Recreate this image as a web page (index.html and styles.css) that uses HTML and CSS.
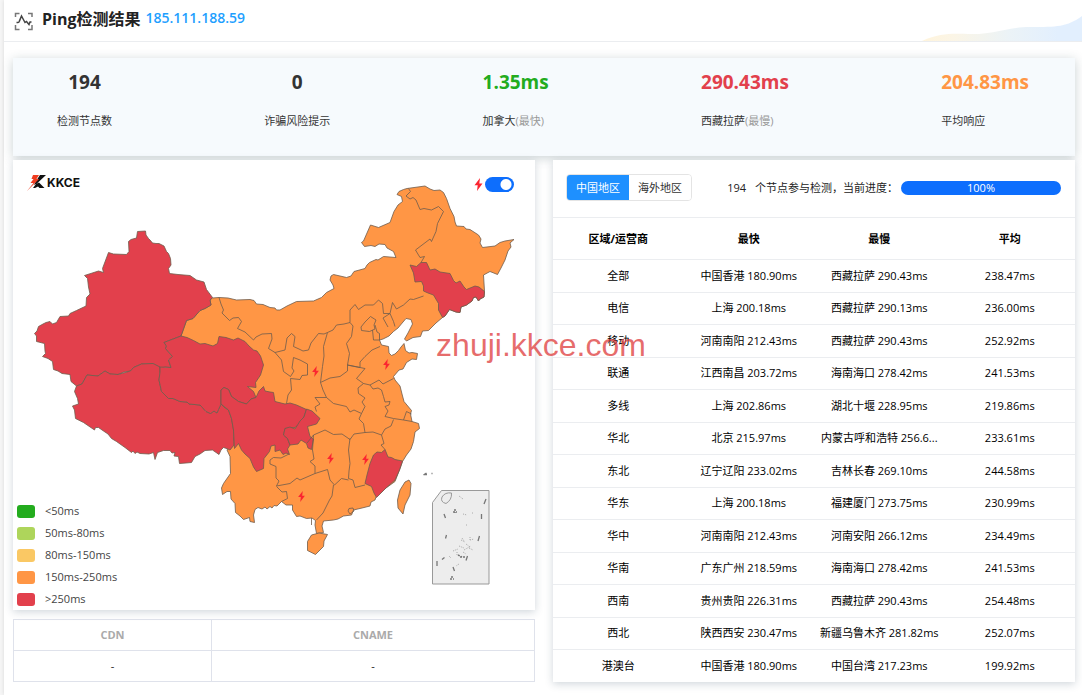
FILE: index.html
```html
<!DOCTYPE html>
<html lang="zh-CN">
<head>
  <meta charset="UTF-8"/>
  <meta name="viewport" content="width=device-width, initial-scale=1.0"/>
  <title>Ping检测结果</title>
  <link rel="stylesheet" href="styles.css">
</head>
<body>

<svg class="defs" aria-hidden="true">
  <symbol id="bolt" viewBox="0 0 8 13"><path d="M5.5 0 L0 7.2 H3.2 L2.5 13 L8 5.6 H4.8 Z" fill="#fb2530"/></symbol>
</svg>

<div class="page">
  <header class="page-header">
    <svg class="header-icon" viewBox="0 0 20 20" fill="none" stroke-width="1.5">
      <path d="M1.500 6V2.500H5.500M14 2.500h4V6M18 14v4.500H14M5.500 18.500H1.500V14" stroke="#777"/>
      <path d="M2.500 11.500h1.500q1 0 1.400-1.400L7.500 5l3.500 6.500 1.500-1 2.500 3 1-2.500h1.500" stroke="#444"/>
    </svg>
    <h1>Ping检测结果</h1>
    <span class="ip">185.111.188.59</span>
    <svg class="wave" viewBox="0 0 160 26" preserveAspectRatio="none">
      <defs>
        <linearGradient id="waveFill">
          <stop offset="0" stop-color="#fff4dc"/>
          <stop offset=".2" stop-color="#fbf5e6"/>
          <stop offset=".55" stop-color="#ebf3f7"/>
          <stop offset=".85" stop-color="#e2effe"/>
          <stop offset="1" stop-color="#e2effe"/>
        </linearGradient>
      </defs>
      <path d="M0 26C20 17 32 19 50 19C75 19 85 12 108 12C135 12 145 12 160 1V26Z" fill="url(#waveFill)"/>
    </svg>
  </header>

  <main class="content">
    <section class="stats">
      <div class="stat center"><b>194</b><span>检测节点数</span></div>
      <div class="stat center"><b>0</b><span>诈骗风险提示</span></div>
      <div class="stat fast"><b>1.35ms</b><span>加拿大<i>(最快)</i></span></div>
      <div class="stat slow"><b>290.43ms</b><span>西藏拉萨<i>(最慢)</i></span></div>
      <div class="stat avg"><b>204.83ms</b><span>平均响应</span></div>
    </section>

    <div class="columns">
      <div class="left">
        <section class="card map-card">
          <svg class="map" viewBox="13 160 522 450" role="img" aria-label="中国地图">
            <g stroke="#6f5c4c" stroke-opacity=".8" stroke-width="1" stroke-linejoin="round">
              <!-- mainland -->
              <path class="mid" d="M212.500 298L219 297.500 228 298 236.500 300 250 299.500 254 300.500 256.500 304 263 304.500 270 307.500 275 308 276.500 310 280 310 287 306 296.500 301.500 313.500 301 321.500 297.500 326.500 292.500 334 288.500 333 285 330 280 331 276 333.500 274.500 346.500 277.500 351 276 354 271.500 365 268.500 367 265 369.500 262.500 376 259.500 378 260 383.500 256.500 396 257.500 393.500 251.500 387 248 385 244.500 379 244 375 246.500 371 245.500 364.500 246.500 361.500 242.500 363.500 241 370.500 225 378.500 227.500 390 222.500 392 217 394 211.500 398 205 402.500 201.500 401.500 196.500 397 194.500 399 191.500 403.500 189.500 407 188.500 425 186 430 189 434 190.500 440 190 443.500 192.500 446.500 198.500 450 208.500 454 216.500 455 222 456.500 226 464 226.500 466 229 470 229.500 478.500 235 481 239 480 243 482.500 247.500 495 246 500 242.500 505 241 514 239.500 510 243 511 247 508 251 505 260 501 268 497.500 274.500 490 271.500 483.500 275 484.500 291.500 484 297 480 299 478.500 301 476 297 473.500 297.500 472 301 466.500 305 461 307 460 312.500 456 312 449.500 309.500 445 316 442.500 317.500 436 323 428.500 330.500 422.500 331 420.500 336.500 413 337.500 406.500 341 404.500 339 408 333 412.500 324 411 319.500 406 318.500 403 322 398 328 393.500 331.500 389 336 383 339 379.500 340 381.500 345 388.500 346.500 389 353 391.500 355.500 395 354 398.500 350.500 401 347 404 343.500 405.500 350.500 409 353 412 352.500 417.500 353.500 416.500 359.500 412 359 406.500 362.500 403 369 399 370 393.500 376.500 395 380 400 386 402 394 404 401.500 411.500 410.500 410.500 414 412 421.500 418.500 423.500 419.500 428.500 415 432 413.500 441.500 411 449 406.500 455 402.500 461.500 400 468.500 395 481.500 386 488 376 497 375 500 371 502 370 506 362 508 353.500 510 351.500 515 343.500 516 338 519 333.500 520 323.500 521 322 526 323.500 532.500 316.500 533.500 315 525 315.500 520.500 312 518 306.500 518.500 300 516 296.500 516.500 292.500 510 292.500 505 286 505 281.500 501.500 277 506 274 505.500 272 508 270 506.500 267 509 265 507 262 509 258 507.500 255 509.500 253.500 515 254.500 522.500 250 521.500 249.500 517.500 243.500 519.500 240 516 235.500 512.500 235 503.500 231 499 230.500 491.500 227 491.500 222.500 494.500 221.500 488 223.500 483.500 230.500 473.500 230 456.500 227 450 233.500 439.500 220 400 190 350 181 336 186.500 320.500 193 318.500 200 310.500 205 308.500 211 305 210 300Z"/>
              <!-- Hainan, Taiwan -->
              <path class="mid" d="M311.500 535L319 533 327.500 534.500 324 541 323.500 546.500 315.500 554.500 307.500 550.500V541.500ZM409 480L411 483.500 410 495 405 505 403 514 398 508 397.500 500 400 490 405 482Z"/>
              <!-- Xinjiang -->
              <path class="high" d="M137.500 231.500L145.500 231 146 235 148.500 238.500 150 240 152.500 243 156 243.500 159 243.500 164 246 166.500 251.500 168.500 253.500 170.500 258.500 171 265 168.500 268.500 169.500 273.500 178 274.500 190 275.500 196.500 280 204 282 206.500 289.500 212.500 297.500 210 300 211 305 205 308.500 200 310.500 193 318.500 186.500 320.500 181 336 164 342.500 166.500 346 165.500 348.500 172.500 356.500 168.500 360 171 367.500 165 367 161 368 153 363.500 141.500 364 133.500 367.500 130.500 371 124 372 118 374.500 110 374 105 371 98 376 87 375 82 384 76.500 386 71 381.500 70 374.500 62 373.500 58 371 53.500 369.500 52.500 361.500 48 358.500 42.500 356.500 45.500 353.500 45 351 44.500 343.500 36.500 341.500 36.500 336 34.500 333.500 37 331 38.500 326.500 43 324 46 322.500 50 321.500 52.500 324 56.500 322.500 60 316.500 68.500 316 70 313.500 76.500 310.500 86 306 86.500 297.500 90 294 88.500 287 87.500 278.500 84.500 275.500 98.500 271 103.500 272.500 102.500 268.500 108.500 252.500 113.500 254 126.500 254.500 129 251.500 128.500 241.500 131 239.500 136.500 238Z"/>
              <!-- Tibet -->
              <path class="high" d="M76.500 386L82 384 87 375 98 376 105 371 110 374 118 374.500 130.500 371 133.500 367.500 141.500 364 153 363.500 160 367 160 372 159 380 161.500 391.500 168.500 398.500 173 398.500 180 401.500 187 402 189 404 200 405 203 408 206 411.500 210.500 413.500 214 411 217 413 218.500 409.500 221 404 225 408 228.500 410 231.500 418.500 233.500 430 234 445 230 450 228 449 223.500 447.500 221 450 219 454.500 212.500 450 205 450.500 200 454 195 456.500 191.500 462.500 186 463 179.500 463.500 178.500 456.500 174 456 175 452.500 172 453 170 450.500 163.500 450.500 157.500 452.500 155 459.500 153.500 452.500 149 454 140 453.500 137 452 135 453.500 133 451 131.500 452.500 125 447.500 116.500 441.500 111.500 438.500 108 434 103.500 431 98.500 427.500 95.500 427.500 94.500 430 83.500 422.500 75.500 418.500 74.500 410 72.500 406 78.500 404 77.500 398.500 74.500 391.500Z"/>
              <!-- Qinghai -->
              <path class="high" d="M181 336L164 342.500 166.500 346 165.500 348.500 172.500 356.500 168.500 360 171 367.500 160 367 160 372 159 380 161.500 391.500 168.500 398.500 173 398.500 180 401.500 187 402 189 404 200 405 206 411.500 210.500 413.500 214 411 217 413 218.500 409.500 221 404 221 390 224 387.500 228.500 389.500 231.500 396.500 238.500 401.500 246.500 404 251 399 256 397.500 253.500 391.500 247.500 386.500 256 387.500 255.500 382.500 260.500 375 263.500 365 260.500 356 257 351 253.500 350 249 346 245 341.500 238 338 233.500 340 226 337.500 219 336.500 217.500 343.500 213 346 205 343.500 200 344 193.500 340.500 187 337.500Z"/>
              <!-- Sichuan -->
              <path class="high" d="M221 404L221 390 224 387.500 228.500 389.500 231.500 396.500 238.500 401.500 246.500 404 251 399 256 397.500 259 391 263.500 386.500 265 391 270 392 273.500 392.500 275 401.500 285 404 290 403 296.500 405 306.500 409.500 304 416.500 300 423.500 295 427.500 285 428.500 283.500 435 287.500 438.500 290 445 287.500 449 289.500 454.500 286 453 283 454.500 280 450 275 451.500 275 445 271 446 269.500 451.500 264 458.500 263.500 468.500 256.500 471.500 253.500 467 250 458.500 245 454 241.500 450 238.500 443.500 234.500 448.500 233.500 430 231.500 418.500 228.500 410Z"/>
              <!-- Chongqing -->
              <path class="high" d="M306.500 409L312 411 320 418.500 316.500 424 307.500 426.500 310 436.500 313.500 439 311.500 449.500 308 448 306.500 443.500 301 440 298 444 290 445 287.500 438.500 283.500 435 285 428.500 290 427 295 429 300 421 304 417Z"/>
              <!-- Jilin -->
              <path class="high" d="M410 265L416.500 266.500 421 262.500 426.500 262.500 430 270 435 269 440 272 450 273.500 453.500 280.500 456 283 460 281 464 287 466.500 289.500 475 286 479 287 484.500 291.500 484 297 480 299 478.500 301 476 297 473.500 297.500 472 301 466.500 305 461 307 460 312.500 456 312 449.500 309.500 445 316 442.500 317.500 438.500 310 438.500 303.500 433.500 295 428 293 423.500 291 423.500 286 421.500 281.500 415 282 413.500 273Z"/>
              <!-- Fujian -->
              <path class="high" d="M385 449.500L388 457 391.500 457.500 395 459.500 402.500 461 399.500 470 395 480 386.500 487.500 376.500 497.500 374 493 371.500 486.500 365 483.500 367 475 370 463.500 373.500 455 377 452 381.500 452.500Z"/>
              <!-- province borders -->
              <g fill="none">
                <path d="M408.500 188.500L410.500 191.500 406 196 410 199 413 197.500 416 200 420 209.500 424 208.500 431.500 210 438.500 206.500 443.500 211.500 437.500 223.500 436 231.500 431.500 241.500 430 239 415.500 250 420 257.500 424.500 256.500 421 262.500"/>
                <path d="M423.500 296L413.500 299.500 410 299 403.500 305 396.500 309 392.500 302.500 390 313.500 393.500 321.500 395 326.500 M388 327L383 318 390 313.500H383.500L382.500 303.500 378.500 300 373.500 305 365 305 358.500 309.500 355 304.500 350 310 350 322.500 353 326 351.500 336.500 346.500 343.500 349.500 353.500 347.500 365 360 367.500 360 362 365 356.500 372 350 380 346.500"/>
                <path d="M370.500 316.500L376 320 374 325 375 329 369.500 331.500 361.500 330.500 361 327 365 322 370.500 316.500M375 325L377 332 379.500 333.500V340L373.500 340 372.500 330"/>
                <path d="M350 322.500L344 324 336.500 325 333 330 327.500 332.500 323.500 346.500 324 356 322.500 366.500 320.500 382.500 330 378 340 376.500 347.500 371V365"/>
                <path d="M327.500 332.500L324 334 318.500 333.500 311 343 308.500 350 303 351 299 349 293.500 346.500 295 336.500 291.500 333.500 287 338 285 350 275 352.500 281.500 360 283.500 371.500 290.500 376.500 294 371 292 368 293.500 357.500 300 360 307.500 364V375L302 375.500 300 379.500 290.500 378.500 291.500 390 288 395 286.500 403.500"/>
                <path d="M219 297.500L221 304 223.500 310 222 313 229.500 320.500 233 318 238.500 317.500 241.500 321.500 237.500 328.500 245 332 253.500 340 256 337 262 334 271.500 333.500 272 339 268.500 348.500 275 352.500"/>
                <path d="M347.500 365L365 368.500 356.500 378.500 363.500 383.500 370 385 379 380 383 384 393.500 378.500"/>
                <path d="M320.500 382.500L323 390 326.500 397.500 333.500 403.500 346.500 406.500 350 412 354 410 361.500 413.500 365 406.500 362 402 365 398 358.500 393.500 358 388 363.500 383.500"/>
                <path d="M370 385L373 389 378 388 381.500 390 383.500 396.500 385 402 390 401.500 389 405 385 406.500 388 411 385 416.500 393.500 418.500 403.500 420 406.500 411.500 411.500 414M403.500 420L412 421.500"/>
                <path d="M326.500 397.500H315L320 404 315 407 316.500 411.500M307 443L313.500 435 325 430 333.500 434.500 342 434 350 439.500 354 434 365 432.500 363.500 423.500 359 419 361.500 413.500M365 432.500L373 432 381.500 435 385 429 391 426 393.500 419.500M381.500 435L384 443.500 381 445 385 449.500"/>
                <path d="M350 438.500L348.500 450 350 463.500 349 471 348.500 478.500 353 480 355 487.500 365 485M313.500 435L312.500 450 314 459 310 461.500 315 466V473.500L327.500 469.500 330 480 334.500 485 341.500 478.500 348.500 480"/>
                <path d="M333.500 485L332 496 329.500 500 323 513 316.500 520M289 454L281 458 273.500 457.500 270 460 270 464 276 466.500 276 478 279 481 276.500 486 290 483.500 297 478 300 480 315 473.500M276.500 486.500L282 492 286.500 491.500 287.500 498.500 281.500 501.500"/>
                <path d="M348 511L349 508.500 353 508 354 511 350 514ZM311.500 518V525"/>
              </g>
            </g>
            <!-- South China Sea inset -->
            <path d="M441.500 490.500H489V584H432.500V502.500Z" fill="#ededed" stroke="#999"/>
            <g fill="none" stroke="#777" stroke-width="1">
              <path d="M442 497Q445 492 451.500 493Q452 500 446 503.500Q440 502 442 497Z" stroke="#999"/>
              <path d="M486 499L484 504M481.500 514V519M444 514L445.500 518M446.500 535L445.500 538.500M479.500 536L478 541M437 561V566M467.500 556L466 560.500M444.500 557.500L442 559.500M453 567L454.500 571" stroke-width="1.300"/>
              <path d="M460 557h5M458 555l4 2M450 579h4M451 577h3M453 512h4M455 509v4" stroke-width="1.500" stroke-dasharray="2 1"/>
              <path d="M459 496l4 3M463 514l4 1M472 513h2M466 525h2M461 540l4 2M462 538l2 3M459 546l5 2M466 544l4 3M470 540l4-1M469 548l4 2M463 552l3 2M453 551l5-2M457 552v3M449 556l2 2M464 550l7-4M470 537v3M459 564l-3 2" stroke="#aaa" stroke-dasharray="1 1"/>
              <path d="M423.500 475l3-2M424 474.500h3M431.500 473.500h1" stroke-width="1.500"/>
            </g>
            <use href="#bolt" x="312" y="366" width="7" height="11"/>
            <use href="#bolt" x="383" y="359" width="7" height="11"/>
            <use href="#bolt" x="327" y="453" width="7" height="11"/>
            <use href="#bolt" x="362" y="454" width="7" height="11"/>
            <use href="#bolt" x="298" y="491" width="7" height="11"/>
          </svg>

          <div class="map-bar">
            <div class="logo">
              <svg viewBox="0 0 20 17">
                <path d="M13 0H19L10 8.500 7 10 9 6Z" fill="#111"/>
                <path d="M9 9L12 7.500 17.500 13H12.500L11 11.500 8 13H6Z" fill="#111"/>
                <path d="M6 0H12L9.500 4H12L0 16 6.500 8H3.500L6.500 4H4.500Z" fill="#f03c20"/>
              </svg>
              <span>KKCE</span>
            </div>
            <label class="switch">
              <svg><use href="#bolt"/></svg>
              <input type="checkbox" aria-label="闪电标记" checked>
            </label>
          </div>

          <ul class="legend">
            <li><i class="l1"></i>&lt;50ms</li>
            <li><i class="l2"></i>50ms-80ms</li>
            <li><i class="l3"></i>80ms-150ms</li>
            <li><i class="l4"></i>150ms-250ms</li>
            <li><i class="l5"></i>&gt;250ms</li>
          </ul>
        </section>

        <table class="cdn-table">
          <thead><tr><th>CDN</th><th>CNAME</th></tr></thead>
          <tbody><tr><td>-</td><td>-</td></tr></tbody>
        </table>
      </div>

      <section class="card result-card">
        <div class="result-bar">
          <div class="tabs">
            <button type="button" class="active">中国地区</button>
            <button type="button">海外地区</button>
          </div>
          <div class="progress-text"><span>194</span>个节点参与检测，当前进度：</div>
          <div class="progress">100%</div>
        </div>
        <div class="table-wrap">
          <table class="result-table">
            <thead>
              <tr><th>区域/运营商</th><th>最快</th><th>最慢</th><th>平均</th></tr>
            </thead>
            <tbody>
              <tr><td>全部</td><td>中国香港 180.90ms</td><td>西藏拉萨 290.43ms</td><td>238.47ms</td></tr>
              <tr><td>电信</td><td>上海 200.18ms</td><td>西藏拉萨 290.13ms</td><td>236.00ms</td></tr>
              <tr><td>移动</td><td>河南南阳 212.43ms</td><td>西藏拉萨 290.43ms</td><td>252.92ms</td></tr>
              <tr><td>联通</td><td>江西南昌 203.72ms</td><td>海南海口 278.42ms</td><td>241.53ms</td></tr>
              <tr><td>多线</td><td>上海 202.86ms</td><td>湖北十堰 228.95ms</td><td>219.86ms</td></tr>
              <tr><td>华北</td><td>北京 215.97ms</td><td>内蒙古呼和浩特 256.6...</td><td>233.61ms</td></tr>
              <tr><td>东北</td><td>辽宁辽阳 233.02ms</td><td>吉林长春 269.10ms</td><td>244.58ms</td></tr>
              <tr><td>华东</td><td>上海 200.18ms</td><td>福建厦门 273.75ms</td><td>230.99ms</td></tr>
              <tr><td>华中</td><td>河南南阳 212.43ms</td><td>河南安阳 266.12ms</td><td>234.49ms</td></tr>
              <tr><td>华南</td><td>广东广州 218.59ms</td><td>海南海口 278.42ms</td><td>241.53ms</td></tr>
              <tr><td>西南</td><td>贵州贵阳 226.31ms</td><td>西藏拉萨 290.43ms</td><td>254.48ms</td></tr>
              <tr><td>西北</td><td>陕西西安 230.47ms</td><td>新疆乌鲁木齐 281.82ms</td><td>252.07ms</td></tr>
              <tr><td>港澳台</td><td>中国香港 180.90ms</td><td>中国台湾 217.23ms</td><td>199.92ms</td></tr>
            </tbody>
          </table>
        </div>
      </section>
    </div>
  </main>
</div>

<div class="watermark">zhuji.kkce.com</div>

</body>
</html>
```

FILE: styles.css
```css
* {
  box-sizing: border-box;
}

body {
  margin: 0;
  padding-left: 4px;
  background: #f6f6f6;
  font-family: "Open Sans", "Noto Sans CJK SC", sans-serif;
  font-size: 11px;
  line-height: 16px;
  color: #222;
}

table {
  border-collapse: collapse;
  table-layout: fixed;
  width: 100%;
}

.defs {
  position: absolute;
  width: 0;
  height: 0;
}

.page {
  min-height: 100vh;
  background: #fff;
  box-shadow: 0 0 4px rgba(0, 0, 0, .12);
}

.page-header {
  display: flex;
  align-items: center;
  height: 42px;
  padding-left: 10px;
  border-bottom: 1px solid #ebedf0;
}

.header-icon {
  width: 20px;
  height: 20px;
  margin-right: 8px;
}

.page-header h1 {
  margin: 0 5px 4px 0;
  font-size: 16px;
  line-height: 24px;
  font-weight: 700;
}

.ip {
  margin-bottom: 5px;
  font-size: 14px;
  font-weight: 600;
  color: #1e9fff;
}

.wave {
  width: 160px;
  height: 26px;
  margin-left: auto;
  align-self: flex-end;
}

.content {
  padding: 16px 7px 12px 9px;
}

.stats {
  display: flex;
  justify-content: space-between;
  height: 98px;
  padding: 11px 46px 12px 44px;
  background: #f6fafd;
  box-shadow: 0 2px 10px rgba(40, 70, 80, .25);
}

.stat {
  display: flex;
  flex-direction: column;
  gap: 18px;
}

.stat.center {
  align-items: center;
}

.stat b {
  font-size: 19px;
  line-height: 26px;
  color: #333;
}

.stat span {
  color: #333;
}

.stat i {
  font-style: normal;
  color: #999;
}

.stat.fast b {
  color: #23ac1e;
}

.stat.slow b {
  color: #e2404c;
}

.stat.avg b {
  color: #ff9645;
}

.columns {
  display: grid;
  grid-template-columns: 1fr 1fr;
  gap: 18px;
  margin-top: 4px;
}

.left {
  display: flex;
  flex-direction: column;
  gap: 9px;
}

.card {
  position: relative;
  background: #fff;
  box-shadow: 0 2px 8px rgba(40, 70, 90, .22);
}

.map {
  display: block;
  width: 100%;
}

.mid {
  fill: #ff9645;
}

.high {
  fill: #e2404c;
}

.map-bar {
  position: absolute;
  top: 14px;
  left: 14px;
  right: 21px;
  display: flex;
  justify-content: space-between;
}

.logo {
  display: flex;
  align-items: center;
  font-family: Inter, sans-serif;
  font-size: 12px;
  font-weight: 700;
  color: #111;
}

.logo svg {
  width: 20px;
  height: 17px;
}

.switch {
  display: flex;
  align-items: center;
  gap: 2px;
  margin-top: 3px;
}

.switch svg {
  width: 9px;
  height: 13px;
}

.switch input {
  appearance: none;
  width: 29px;
  height: 15px;
  margin: 0;
  border-radius: 8px;
  background: radial-gradient(circle at 21px 50%, #fff 5px, #0d6efd 6px);
}

.legend {
  position: absolute;
  left: 4px;
  bottom: 0;
  margin: 0;
  padding: 0;
  list-style: none;
  color: #444;
}

.legend li {
  display: flex;
  align-items: center;
  gap: 10px;
  line-height: 22px;
}

.legend i {
  width: 18px;
  height: 13px;
  border-radius: 3px;
}

.l1 { background: #23ac1e; }
.l2 { background: #aed55b; }
.l3 { background: #fac864; }
.l4 { background: #ff9645; }
.l5 { background: #e2404c; }

.cdn-table th,
.cdn-table td {
  height: 31px;
  padding: 0;
  border: 1px solid #dfe2eb;
  text-align: center;
}

.cdn-table th {
  color: #aaa;
}

.cdn-table th:first-child {
  width: 38%;
}

.result-card {
  display: flex;
  flex-direction: column;
}

.result-bar {
  display: flex;
  align-items: center;
  height: 57px;
  padding: 0 14px 2px 13px;
}

.tabs {
  display: flex;
  border: 1px solid #e4e4e4;
  border-radius: 4px;
  overflow: hidden;
}

.tabs button {
  height: 25px;
  padding: 0 9px;
  border: 0;
  background: #fff;
  font: inherit;
  color: #333;
}

.tabs button.active {
  background: #1e90ff;
  color: #fff;
}

.progress-text {
  margin-left: auto;
  margin-right: 3px;
  white-space: nowrap;
}

.progress-text span {
  margin-right: 9px;
}

.progress {
  width: 160px;
  height: 14px;
  border-radius: 7px;
  background: #0d6efd;
  line-height: 13px;
  text-align: center;
  color: #fff;
}

.table-wrap {
  flex: 1;
}

.result-table {
  height: 100%;
  color: #000;
}

.result-table th,
.result-table td {
  padding: 0;
  border-top: 1px solid #ebedf0;
  text-align: center;
  white-space: nowrap;
}

.result-table th {
  height: 42px;
}

.result-table td {
  height: 32px;
}

.watermark {
  position: absolute;
  top: 50%;
  left: 50%;
  padding-bottom: 5px;
  transform: translate(-50%, -50%);
  font: 32px "Liberation Sans", sans-serif;
  color: rgba(222, 60, 60, .75);
  pointer-events: none;
}
```
